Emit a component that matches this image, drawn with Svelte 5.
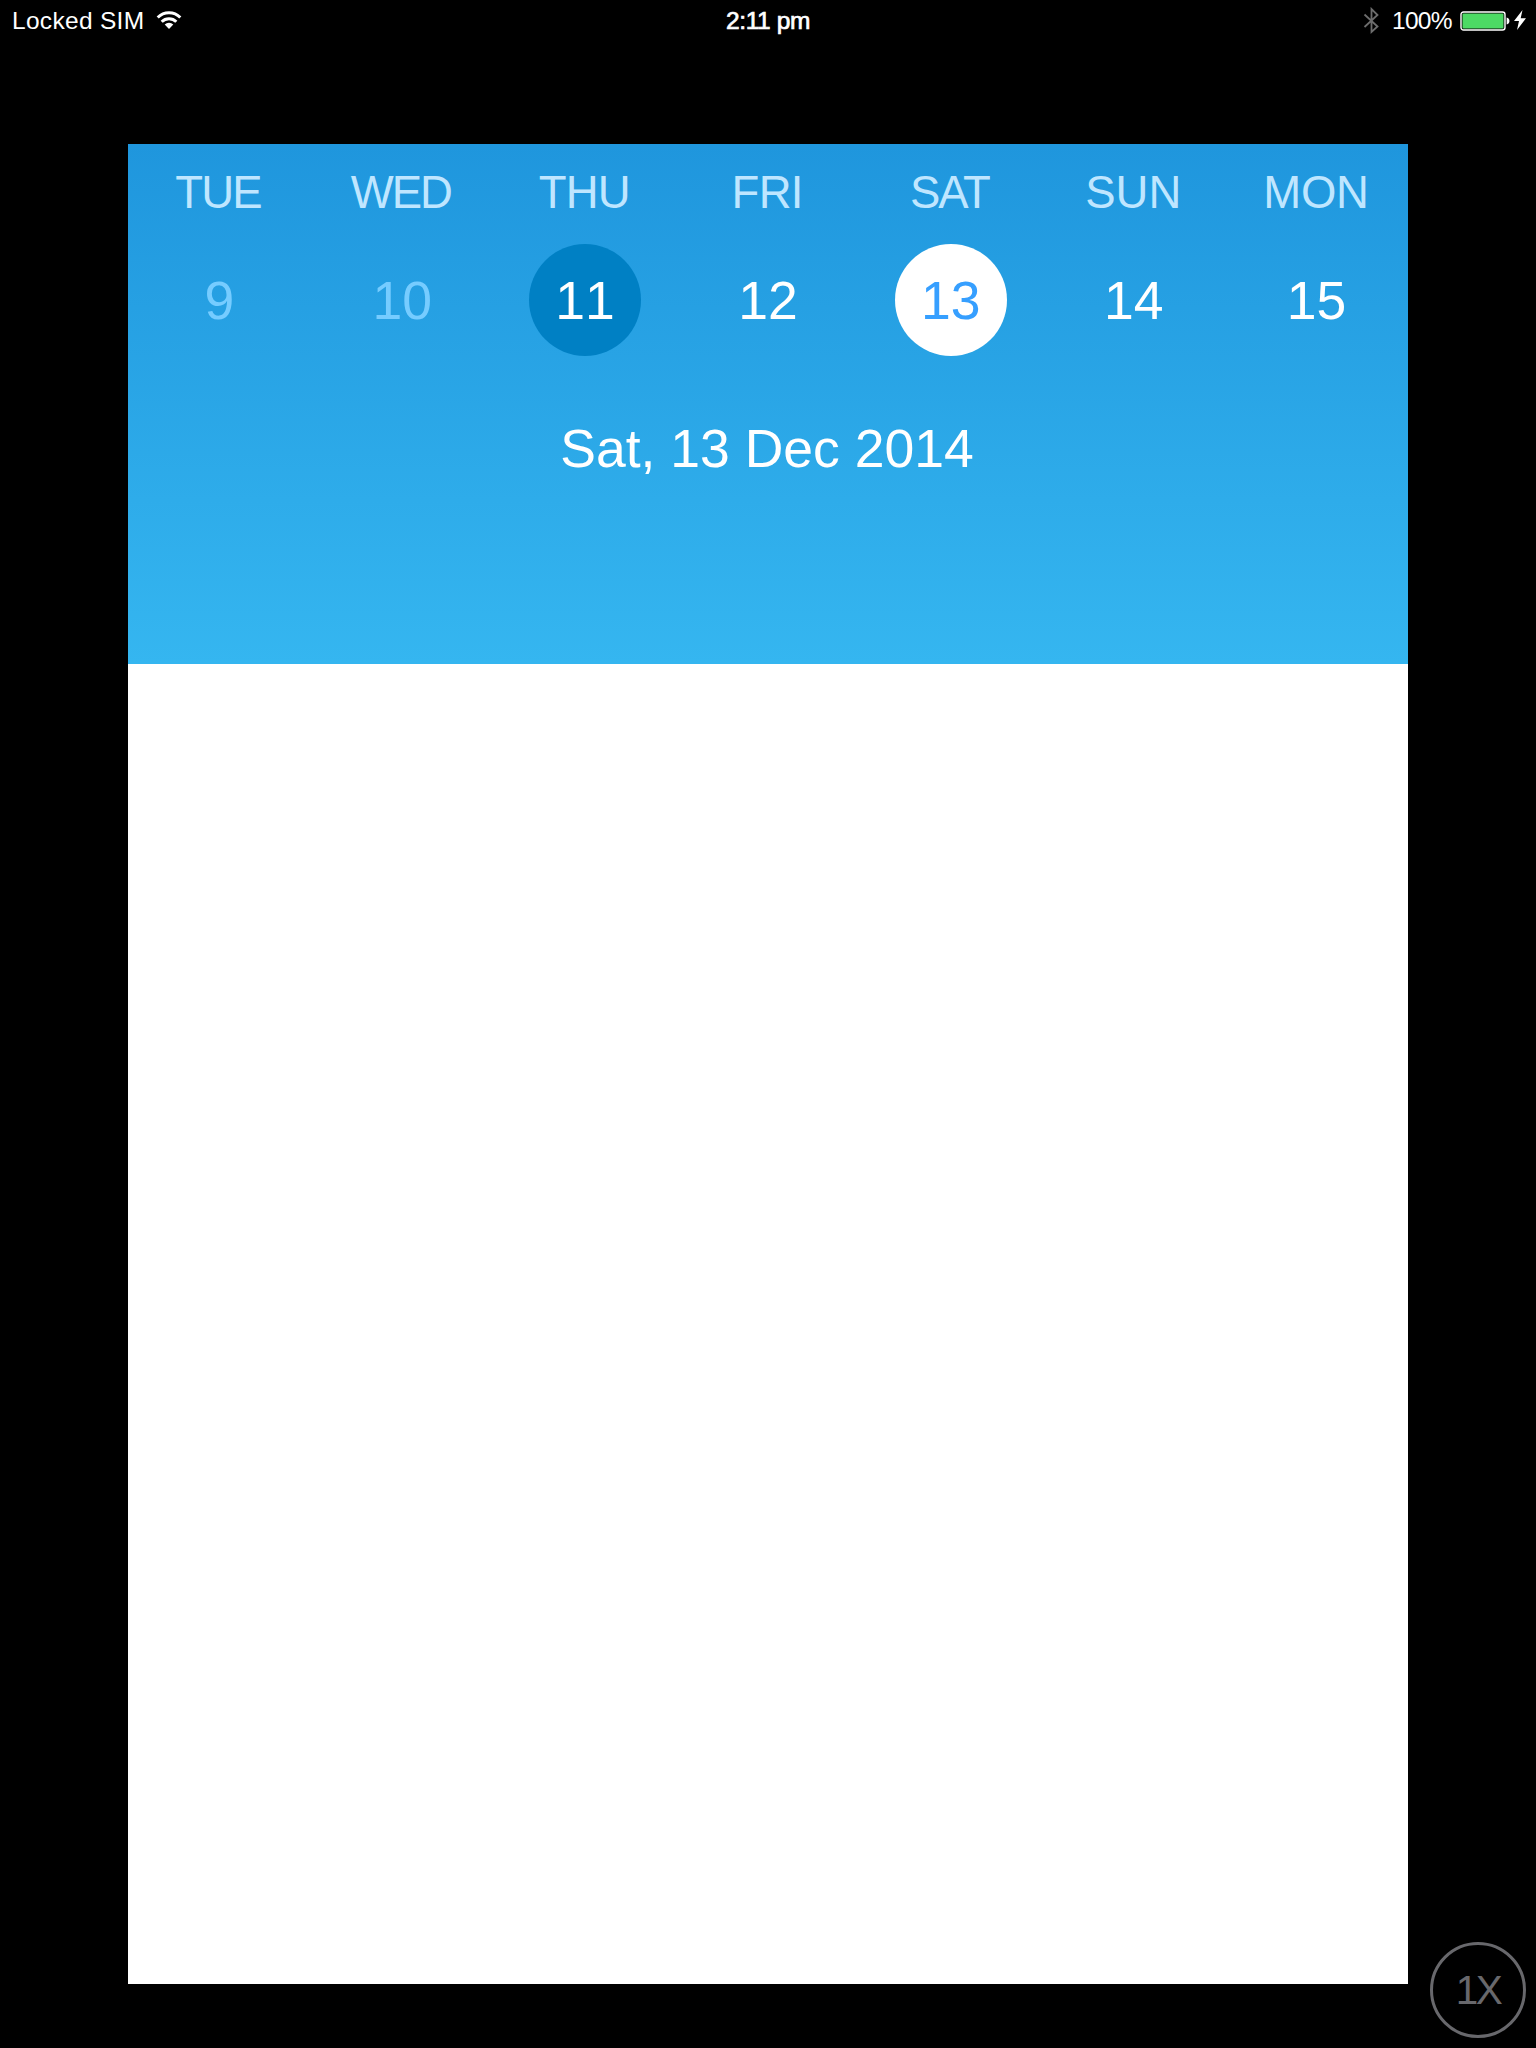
<script>
  const days = [
    { name: 'TUE', date: 9, state: 'past', track: -1.8 },
    { name: 'WED', date: 10, state: 'past', track: -2 },
    { name: 'THU', date: 11, state: 'today', track: -0.8 },
    { name: 'FRI', date: 12, state: '', track: -0.7 },
    { name: 'SAT', date: 13, state: 'selected', track: -2.2 },
    { name: 'SUN', date: 14, state: '', track: 0 },
    { name: 'MON', date: 15, state: '', track: -0.2 }
  ];
</script>

<div class="screen">
  <div class="status">
    <div class="left">
      <span class="carrier">Locked SIM</span>
      <svg class="wifi" width="26" height="20" viewBox="0 0 26 20">
        <g fill="none" stroke="#fff" stroke-width="3">
          <path d="M1.7 7.5A16 16 0 0 1 24.3 7.5" />
          <path d="M5.7 11.7A10.4 10.4 0 0 1 20.3 11.7" />
        </g>
        <path d="M8.7 14.6A6.1 6.1 0 0 1 17.3 14.6L13 19Z" fill="#fff" />
      </svg>
    </div>
    <span class="time">2:11 pm</span>
    <div class="right">
      <svg class="bluetooth" width="17" height="28" viewBox="0 0 17 28">
        <path d="M1.5 7.5L14.5 19.5L8.5 25V2L14.5 8L1.5 20" fill="none" stroke="#6d6d6d" stroke-width="1.8" />
      </svg>
      <span class="percent">100%</span>
      <svg class="battery" width="50" height="20" viewBox="0 0 50 20">
        <rect x="1" y="1" width="44" height="18" rx="2.5" fill="none" stroke="#fff" stroke-width="1.4" />
        <rect x="2.5" y="2.5" width="41" height="15" rx="1" fill="#4cd964" />
        <path d="M46.6 6.5C50.4 7 50.4 13 46.6 13.5Z" fill="#fff" />
      </svg>
      <svg class="bolt" width="12" height="20" viewBox="0 0 12 20">
        <path d="M8.5 0L0 11H5L3 20L12 8.2H6.7Z" fill="#fff" />
      </svg>
    </div>
  </div>

  <main class="app">
    <header>
      <div class="week">
        {#each days as day}
          <div class="day">
            <span class="name" style="--track: {day.track}px">{day.name}</span>
            <span class="date {day.state}"><span class="num">{day.date}</span></span>
          </div>
        {/each}
      </div>
      <div class="full-date">Sat, 13 Dec 2014</div>
    </header>
  </main>

  <button class="zoom">1X</button>
</div>

<style>
  :global(body) {
    margin: 0;
    background: #000;
  }
  .screen {
    position: relative;
    width: 1536px;
    height: 2048px;
    background: #000;
    font-family: 'Liberation Sans', Arial, sans-serif;
    color: #fff;
    overflow: hidden;
  }
  .status {
    display: grid;
    grid-template-columns: 1fr auto 1fr;
    height: 144px;
    box-sizing: border-box;
    padding: 0 10px 0 12px;
    font-size: 24.5px;
    line-height: 41px;
    white-space: nowrap;
  }
  .left,
  .right {
    display: flex;
    height: 41px;
  }
  .right {
    justify-content: flex-end;
  }
  .carrier {
    width: 144px;
    letter-spacing: 0.3px;
  }
  .wifi {
    margin-top: 10px;
  }
  .time {
    padding-right: 2px;
    letter-spacing: -0.4px;
    -webkit-text-stroke: 0.7px #fff;
  }
  .bluetooth {
    margin: 7px 12px 0 0;
  }
  .percent {
    width: 68px;
    letter-spacing: -0.7px;
  }
  .battery {
    margin-top: 11px;
  }
  .bolt {
    margin: 10px 0 0 4px;
  }
  .app {
    width: 1280px;
    height: 1840px;
    margin: 0 auto;
    background: #fff;
  }
  header {
    height: 520px;
    background: linear-gradient(#1f96dd, #35b6f0);
  }
  .week {
    display: grid;
    grid-template-columns: repeat(7, 1fr);
    padding-top: 22px;
  }
  .day {
    display: flex;
    flex-direction: column;
    align-items: center;
  }
  .name {
    height: 78px;
    font-size: 45.5px;
    line-height: 54px;
    letter-spacing: var(--track);
    margin-right: calc(1px - var(--track));
    color: #bfe6ff;
  }
  .date {
    display: flex;
    align-items: center;
    justify-content: center;
    width: 112px;
    height: 112px;
    border-radius: 50%;
    font-size: 53.5px;
  }
  .num {
    padding-top: 2px;
    line-height: 62px;
    font-kerning: none;
  }
  .past {
    color: #76ccff;
  }
  .today {
    background: #0080c4;
  }
  .selected {
    background: #fff;
    color: #369fff;
  }
  .full-date {
    margin-top: 62px;
    padding-right: 2px;
    text-align: center;
    font-size: 53.5px;
    line-height: 62px;
  }
  .zoom {
    position: absolute;
    right: 10px;
    bottom: 10px;
    width: 96px;
    height: 96px;
    padding: 0;
    border: 3px solid #68686c;
    border-radius: 50%;
    background: none;
    color: #68686c;
    font: 40.5px/88px 'Liberation Sans', Arial, sans-serif;
    letter-spacing: -2.5px;
  }
</style>
